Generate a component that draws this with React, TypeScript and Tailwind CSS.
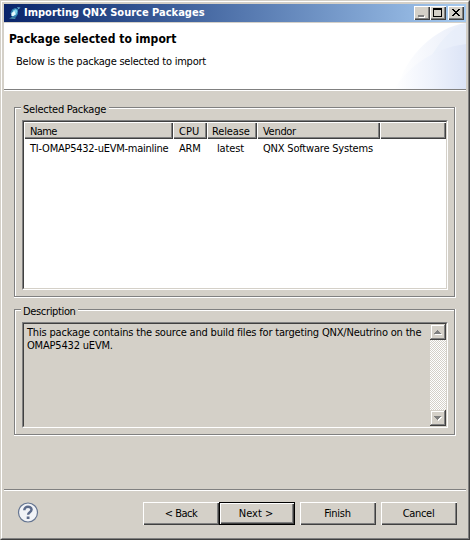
import type { ReactNode } from "react";

const raised =
  "bg-[#d4d0c8] shadow-[inset_1px_1px_0_#fff,inset_-1px_-1px_0_#404040,inset_-2px_-2px_0_#808080]";

function WindowButton({ children, className = "" }: { children: ReactNode; className?: string }) {
  return (
    <button className={`h-[14px] w-4 shrink-0 ${raised} ${className}`}>
      <svg width="16" height="14" viewBox="0 0 16 14" shapeRendering="crispEdges">
        {children}
      </svg>
    </button>
  );
}

function Group({ title, titleClass, className, children }: { title: string; titleClass: string; className: string; children: ReactNode }) {
  return (
    <section className={`ml-[10px] w-[442px] bg-white pr-px pb-px ${className}`}>
      <div className="h-full border border-[#808080] bg-[#d4d0c8] pl-[7px] shadow-[inset_1px_1px_0_#fff]">
        <div className="h-3">
          <h2 className={`relative -left-px -top-[6px] h-[14px] bg-[#d4d0c8] pl-[2px] leading-4 whitespace-nowrap ${titleClass}`}>
            {title}
          </h2>
        </div>
        {children}
      </div>
    </section>
  );
}

function Sunken({ className, children }: { className: string; children: ReactNode }) {
  return (
    <div className={`w-[426px] border border-t-[#808080] border-l-[#808080] border-r-white border-b-white ${className}`}>
      <div className="h-full border border-t-[#404040] border-l-[#404040] border-r-[#d4d0c8] border-b-[#d4d0c8]">{children}</div>
    </div>
  );
}

function HeaderCell({ children, className }: { children?: ReactNode; className: string }) {
  return (
    <div className={`h-[17px] shrink-0 leading-5 whitespace-nowrap ${raised} ${className}`}>{children}</div>
  );
}

function DialogButton({ children, className = "" }: { children: ReactNode; className?: string }) {
  return (
    <button className={`h-[23px] w-[76px] shrink-0 text-center leading-[21px] ${raised} ${className}`}>{children}</button>
  );
}

function ScrollButton({ down = false }: { down?: boolean }) {
  return (
    <button className="h-4 w-4 bg-[#d4d0c8] shadow-[inset_-1px_-1px_0_#404040,inset_1px_1px_0_#d4d0c8,inset_-2px_-2px_0_#808080,inset_2px_2px_0_#fff]">
      <svg width="16" height="16" viewBox="0 0 16 16" shapeRendering="crispEdges">
        {down ? (
          <>
            <path d="M5 7h7v1h-1v1h-1v1H9v1H8v-1H7V9H6V8H5z" fill="#fff" />
            <path d="M4 6h7v1h-1v1H9v1H8v1H7V9H6V8H5V7H4z" fill="#808080" />
          </>
        ) : (
          <>
            <path d="M5 10h7v1H5z" fill="#fff" />
            <path d="M7 6h1v1h1v1h1v1h1v1H4V9h1V8h1V7h1z" fill="#808080" />
          </>
        )}
      </svg>
    </button>
  );
}

export default function App() {
  return (
    <div className="h-[540px] w-[470px] overflow-hidden border border-t-[#d4d0c8] border-l-[#d4d0c8] border-r-[#404040] border-b-[#404040] bg-[#d4d0c8] font-['DejaVu_Sans_Condensed','DejaVu_Sans',sans-serif] text-[11px] text-black [font-stretch:condensed]">
      <div className="h-full border border-t-white border-l-white border-r-[#808080] border-b-[#808080] px-[2px] pt-[2px]">
        <header className="flex h-[18px] w-[462px] items-center bg-linear-to-r from-[#0a246a] to-[#a6caf0] pr-[2px]">
          <svg className="ml-[3px] shrink-0" width="16" height="16" viewBox="0 0 16 16">
            <path d="M3.5 8 5 4.500 8 3l3 1v5l-2 3H5z" fill="#2f7fae" />
            <path d="M6 5.500 9 4l1.500 2L9 10 5.500 11z" fill="#7fd0ea" />
            <path d="m4.500 8 3-2 1 3-2 2h-2z" fill="#e6fafd" />
            <path d="m10 2 3.500.5-2 2z" fill="#5fa9cc" />
            <path d="M2 13.500 5 12l4 .5-1 1.500z" fill="#4a90ad" />
          </svg>
          <h1 className="ml-px grow text-[11px] leading-[18px] font-bold whitespace-nowrap text-white">
            Importing QNX Source Packages
          </h1>
          <WindowButton>
            <path d="M5 10h6v2H5z" fill="#fff" />
            <path d="M4 9h6v2H4z" fill="#808080" />
          </WindowButton>
          <WindowButton>
            <path d="M3 2h9v9H3zm1 2v6h7V4z" fill="#000" fillRule="evenodd" />
          </WindowButton>
          <WindowButton className="ml-[2px]">
            <path d="M4 3h2v1h1v1h2V4h1V3h2v1h-1v1h-1v1H9v1h1v1h1v1h1v1h-2V9H9V8H7v1H6v1H4V9h1V8h1V7h1V6H6V5H5V4H4z" fill="#000" />
          </WindowButton>
        </header>

        <div className="mt-px flex h-[68px] justify-between border-b border-white">
          <div className="flex h-[67px] w-full justify-between border-b border-[#808080] bg-white">
            <div className="pt-[8px] pl-[5px]">
              <h2 className="text-[12px] leading-4 font-bold tracking-[0.03px] whitespace-nowrap">Package selected to import</h2>
              <p className="mt-[8px] ml-[7px] leading-[14px] tracking-[-0.23px] whitespace-nowrap">Below is the package selected to import</p>
            </div>
            <svg width="76" height="66" viewBox="0 0 76 66">
              <defs>
                <linearGradient id="back" x1="0" x2="1">
                  <stop stopColor="#fff" />
                  <stop offset="1" stopColor="#e8edf9" />
                </linearGradient>
                <linearGradient id="front" x1="0" x2="1">
                  <stop stopColor="#fff" />
                  <stop offset="0.5" stopColor="#eff3fc" />
                  <stop offset="1" stopColor="#dce4f6" />
                </linearGradient>
              </defs>
              <path d="M7 66C15 34 45 4 76 0v66z" fill="url(#back)" />
              <path d="M34 46C44 27 58 5 76 0v66H34z" fill="#e6ecf9" opacity="0.55" />
              <path d="M4 66C20 42 44 25 76 21v45z" fill="url(#front)" />
            </svg>
          </div>
        </div>

        <main>
          <Group title="Selected Package" titleClass="w-[88px] tracking-[-0.25px]" className="mt-4 h-[191px]">
            <Sunken className="h-[170px] bg-white">
              <div className="flex">
                <HeaderCell className="w-[149px] pl-[6px] tracking-[-0.6px]">Name</HeaderCell>
                <HeaderCell className="w-[34px] pl-[6px]">CPU</HeaderCell>
                <HeaderCell className="w-[50px] pl-[5px] tracking-[-0.15px]">Release</HeaderCell>
                <HeaderCell className="w-[123px] pl-[6px] tracking-[-0.3px]">Vendor</HeaderCell>
                <HeaderCell className="w-[66px]" />
              </div>
              <div className="flex h-[18px] leading-5 whitespace-nowrap">
                <span className="w-[149px] pl-[6px] tracking-[-0.25px]">TI-OMAP5432-uEVM-mainline</span>
                <span className="w-[34px] pl-[6px] tracking-[-0.15px]">ARM</span>
                <span className="w-[50px] pl-[10px] tracking-[-0.15px]">latest</span>
                <span className="pl-[6px] tracking-[-0.2px]">QNX Software Systems</span>
              </div>
            </Sunken>
          </Group>

          <Group title="Description" titleClass="w-[57px] tracking-[-0.35px]" className="mt-[11px] h-[127px]">
            <Sunken className="h-[106px]">
              <div className="flex h-full justify-between">
                <p className="w-0 pt-[2px] pl-[3px] leading-[13px] tracking-[-0.185px] whitespace-nowrap">
                  This package contains the source and build files for targeting QNX/Neutrino on the
                  <br />
                  OMAP5432 uEVM.
                </p>
                <div className="flex w-4 shrink-0 flex-col justify-between bg-[conic-gradient(#fff_25%,#d4d0c8_0_50%,#fff_0_75%,#d4d0c8_0)] bg-size-[2px_2px]">
                  <ScrollButton />
                  <ScrollButton down />
                </div>
              </div>
            </Sunken>
          </Group>
        </main>

        <footer className="mt-[53px] w-[462px] border-t border-[#808080] shadow-[inset_0_1px_0_#fff]">
          <div className="flex pt-3">
            <svg className="ml-[13px] shrink-0" width="22" height="22" viewBox="0 0 22 22">
              <circle cx="11" cy="10.5" r="9.5" fill="#f1f3f7" stroke="#657591" strokeWidth="1.2" />
              <path d="M7.400 8.200C7.200 3.700 14.700 3.700 14.500 7.800c-.1 2.500-3.400 2.400-3.400 5" fill="none" stroke="#5c6b8b" strokeWidth="2.5" />
              <path d="M9.700 14.500h2.800v2.500H9.700z" fill="#5c6b8b" />
            </svg>
            <DialogButton className="ml-[104px] tracking-[-0.5px]">&lt; Back</DialogButton>
            <button className="h-[23px] w-[76px] shrink-0 border border-black bg-[#d4d0c8] pr-[2px] text-center leading-[21px] shadow-[inset_1px_1px_0_#fff,inset_-1px_-1px_0_#404040,inset_-2px_-2px_0_#808080]">
              Next &gt;
            </button>
            <DialogButton className="ml-[5px] pr-px tracking-[-0.25px]">Finish</DialogButton>
            <DialogButton className="ml-[5px] pr-px tracking-[-0.3px]">Cancel</DialogButton>
          </div>
        </footer>
      </div>
    </div>
  );
}
